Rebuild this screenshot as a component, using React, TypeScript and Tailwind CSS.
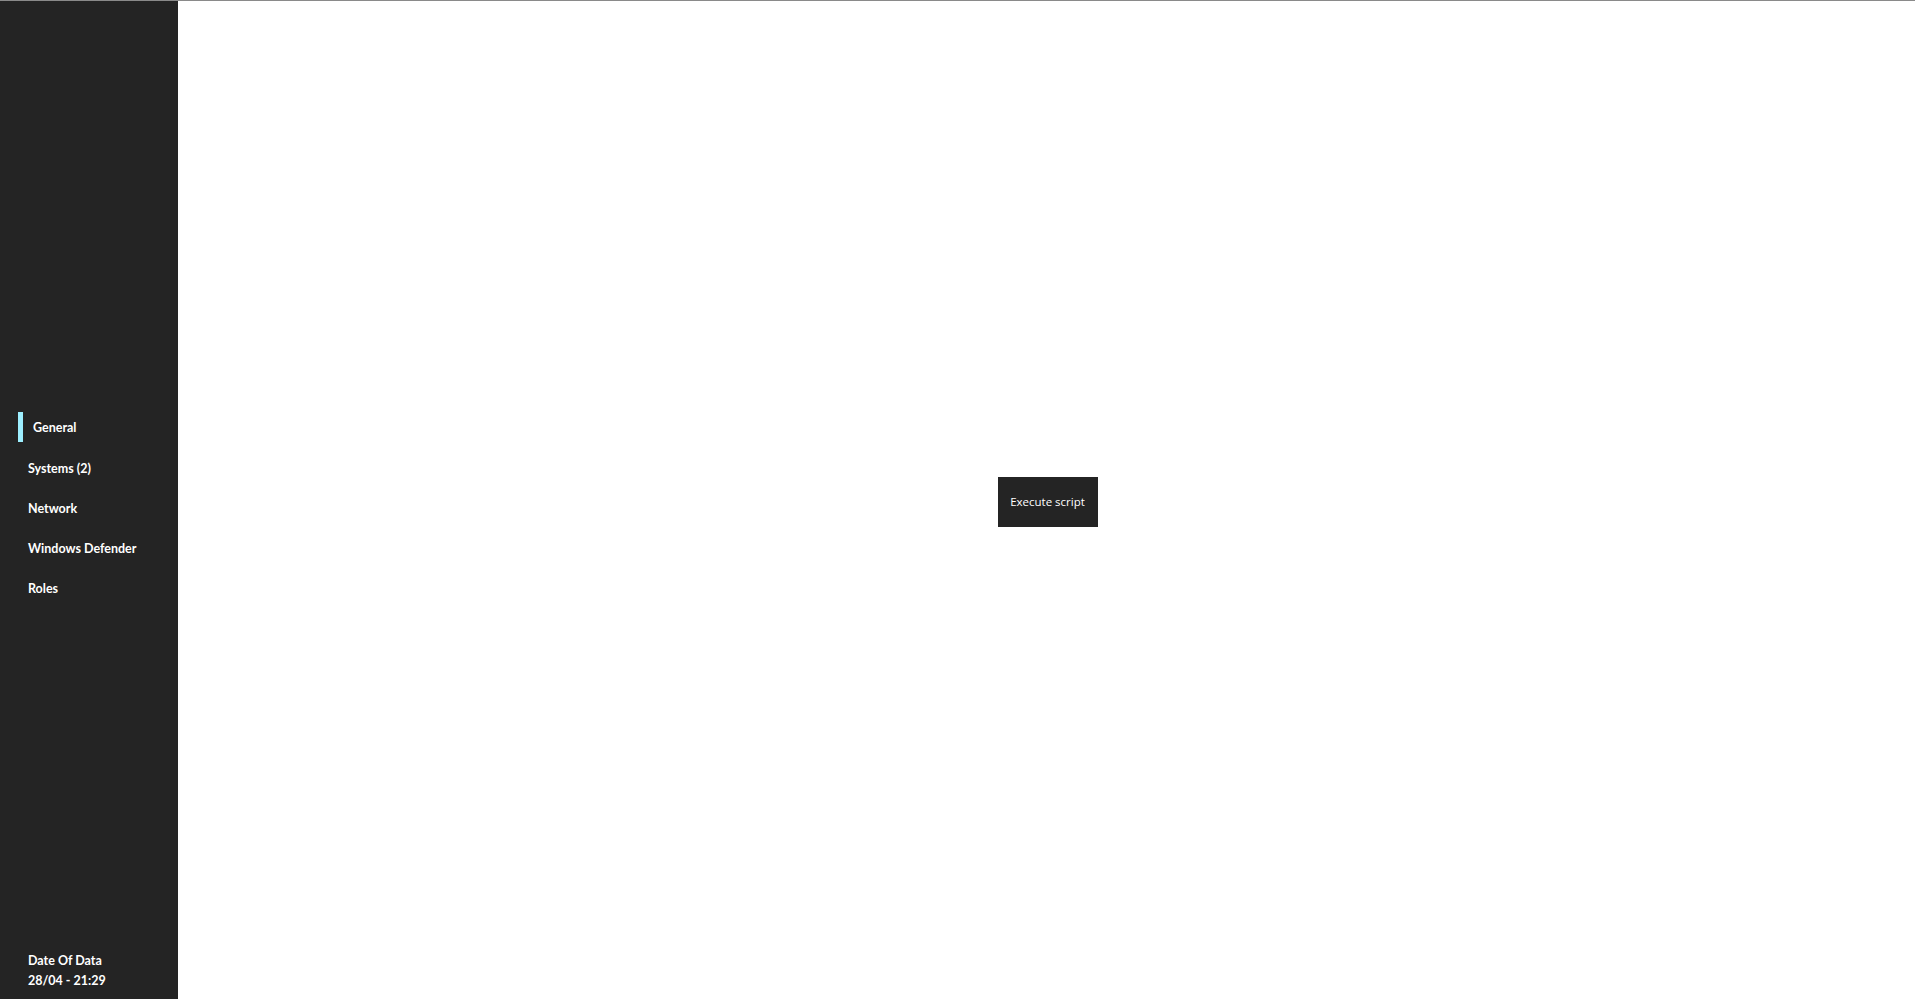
import React from "react";

const items = ["Systems (2)", "Network", "Windows Defender", "Roles"];

export default function App() {
  return (
    <div className="h-[999px] w-full flex flex-col border-t border-[#8a8a8a] bg-white overflow-hidden">
      <div className="flex flex-1 min-h-0">
        <aside className="w-[178px] shrink-0 bg-[#242424] flex flex-col text-white font-['Lato',sans-serif] font-bold text-[12.5px]">
          <div className="h-[411px]" />
          <nav className="flex flex-col">
            <div className="h-[30px] flex items-center pl-[18px] mb-[6px]">
              <span className="w-[5px] h-[30px] bg-[#9defff]" />
              <span className="ml-[10px] pt-[3px]">General</span>
            </div>
            {items.map((t) => (
              <div key={t} className="h-[40px] flex items-center pl-[28px] pt-[2px]">
                {t}
              </div>
            ))}
          </nav>
          <div className="flex-1" />
          <div className="pl-[28px] pb-[8px] leading-[20px]">
            <div>Date Of Data</div>
            <div>28/04 - 21:29</div>
          </div>
        </aside>
        <main className="flex-1 flex items-center justify-center pt-[4px] pl-[2px]">
          <button className="w-[100px] h-[50px] bg-[#242424] text-white text-[11.5px] font-['Open_Sans',sans-serif]">
            Execute script
          </button>
        </main>
      </div>
    </div>
  );
}
